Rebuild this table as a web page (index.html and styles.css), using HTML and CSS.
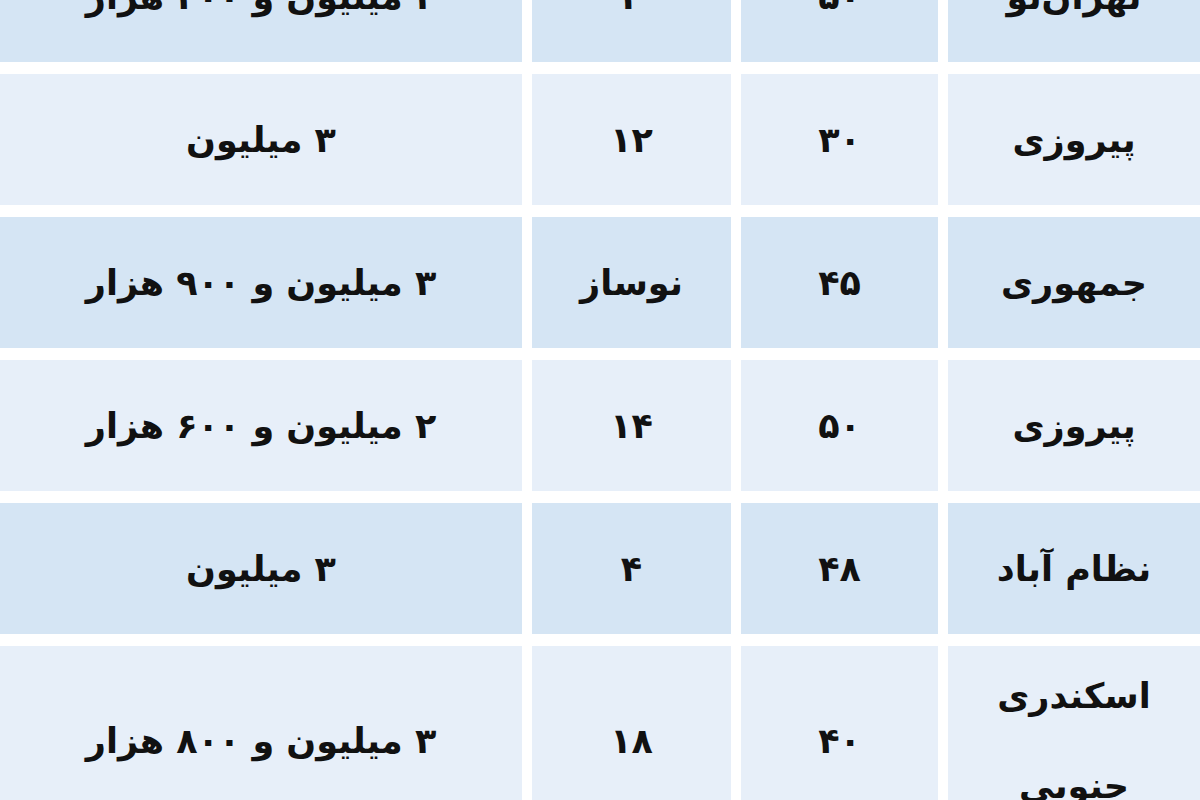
FILE: index.html
```html
<!DOCTYPE html>
<html lang="fa" dir="rtl">
<head>
<meta charset="utf-8">
<title>جدول قیمت</title>
<link rel="stylesheet" href="styles.css">
</head>
<body>
<div class="table">
  <div class="cell dark">تهران‌نو</div>
  <div class="cell dark">۵۰</div>
  <div class="cell dark">۲</div>
  <div class="cell dark">۳ میلیون و ۲۰۰ هزار</div>

  <div class="cell light">پیروزی</div>
  <div class="cell light">۳۰</div>
  <div class="cell light">۱۲</div>
  <div class="cell light">۳ میلیون</div>

  <div class="cell dark">جمهوری</div>
  <div class="cell dark">۴۵</div>
  <div class="cell dark">نوساز</div>
  <div class="cell dark">۳ میلیون و ۹۰۰ هزار</div>

  <div class="cell light">پیروزی</div>
  <div class="cell light">۵۰</div>
  <div class="cell light">۱۴</div>
  <div class="cell light">۲ میلیون و ۶۰۰ هزار</div>

  <div class="cell dark">نظام آباد</div>
  <div class="cell dark">۴۸</div>
  <div class="cell dark">۴</div>
  <div class="cell dark">۳ میلیون</div>

  <div class="cell light name-wrap">اسکندری جنوبی</div>
  <div class="cell light">۴۰</div>
  <div class="cell light">۱۸</div>
  <div class="cell light">۳ میلیون و ۸۰۰ هزار</div>
</div>
</body>
</html>
```

FILE: styles.css
```css
html, body {
  margin: 0;
  padding: 0;
  background: #ffffff;
  overflow: hidden;
}

body {
  width: 1200px;
  height: 800px;
  font-family: "DejaVu Sans", sans-serif;
  color: #111111;
}

.table {
  direction: rtl;
  display: grid;
  grid-template-columns: 252px 197px 199px 522px;
  grid-auto-rows: minmax(131px, auto);
  column-gap: 10px;
  row-gap: 12px;
  margin-top: -69px;
}

.cell {
  display: flex;
  align-items: center;
  justify-content: center;
  text-align: center;
  font-size: 35px;
  font-weight: bold;
  line-height: 90px;
}

.dark {
  background: #d5e5f4;
}

.light {
  background: #e7eff9;
}

.name-wrap {
  padding: 0 60px;
  height: 190px;
}
```
